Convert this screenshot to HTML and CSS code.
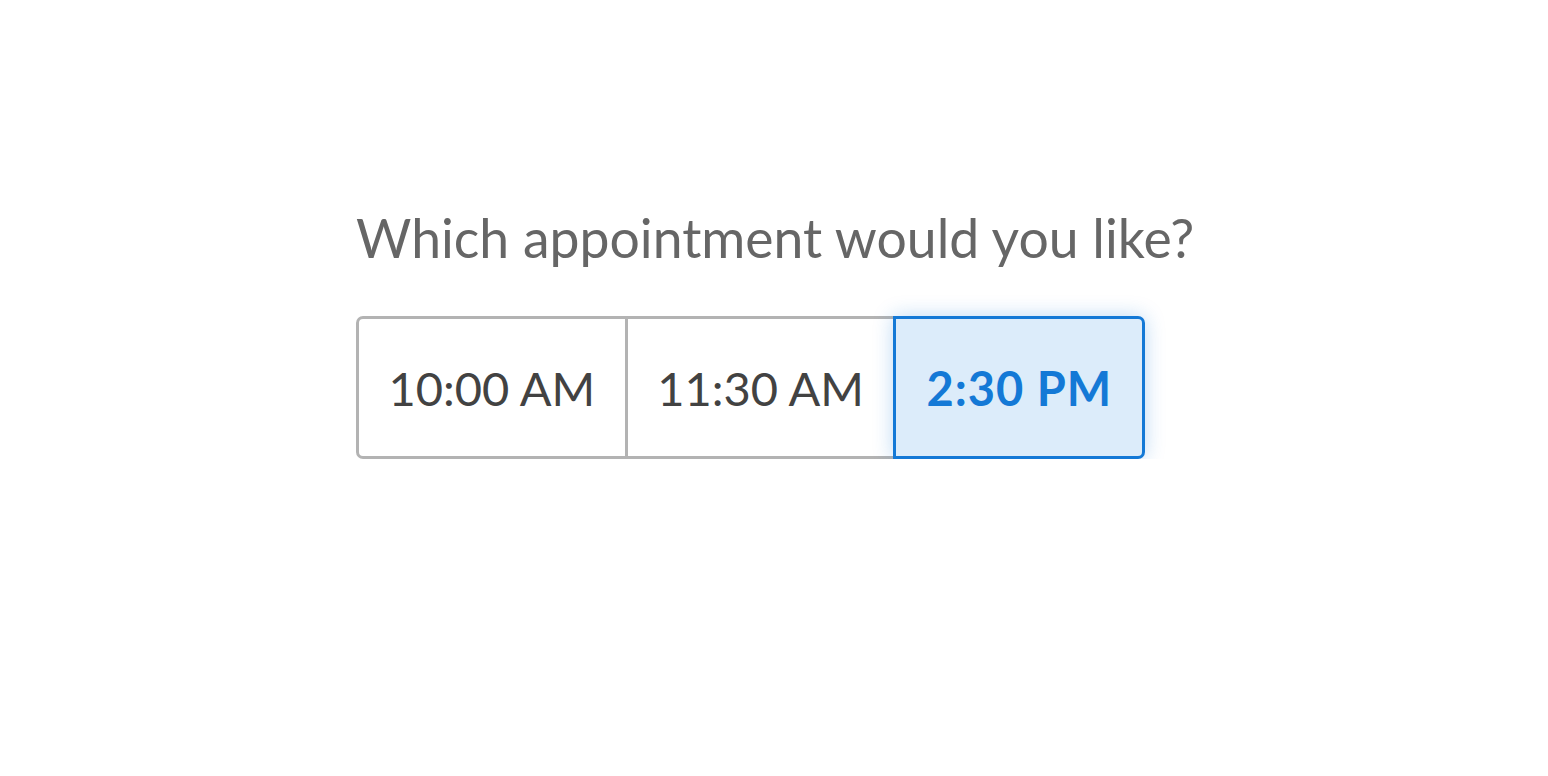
FILE: index.html
```html
<!DOCTYPE html>
<html lang="en">
<head>
    <meta charset="UTF-8">
    <meta name="viewport" content="width=device-width, initial-scale=1.0">
    <title>Pick a time</title>
    <link rel="stylesheet" href="styles.css">
</head>
<body>
    <div class="container">
        <h1 class="question">Which appointment would you like?</h1>
        <div class="times">
            <button class="time">10:00 AM</button>
            <button class="time">11:30 AM</button>
            <button class="time selected">2:30 PM</button>
        </div>
    </div>
</body>
</html>
```

FILE: styles.css
```css
body {
    margin: 0;
    font-family: Lato, "Noto Sans", sans-serif;
    background-color: #fff;
}
.container {
    width: 836px;
    margin: 0 auto;
    padding-top: 202px;
}
.question {
    margin: 0 0 44px 0;
    font-size: 53.5px;
    font-weight: 400;
    color: #666;
    line-height: 70px;
    white-space: nowrap;
}
.times {
    display: flex;
}
.time {
    position: relative;
    height: 143px;
    padding: 0 29.5px;
    margin-left: -3px;
    font-family: inherit;
    font-size: 47px;
    color: #424242;
    background-color: #fff;
    border: 3px solid #b3b3b3;
    border-radius: 0;
    white-space: nowrap;
    cursor: pointer;
}
.time:first-child {
    margin-left: 0;
    border-radius: 7px 0 0 7px;
}
.time:last-child {
    border-radius: 0 7px 7px 0;
}
.time.selected {
    z-index: 1;
    padding: 0 30px;
    color: #1479d6;
    font-weight: 700;
    letter-spacing: 1px;
    background-color: #dcecfa;
    border-color: #1479d6;
    box-shadow: 0 0 20px rgba(20, 121, 214, 0.28);
}
```
